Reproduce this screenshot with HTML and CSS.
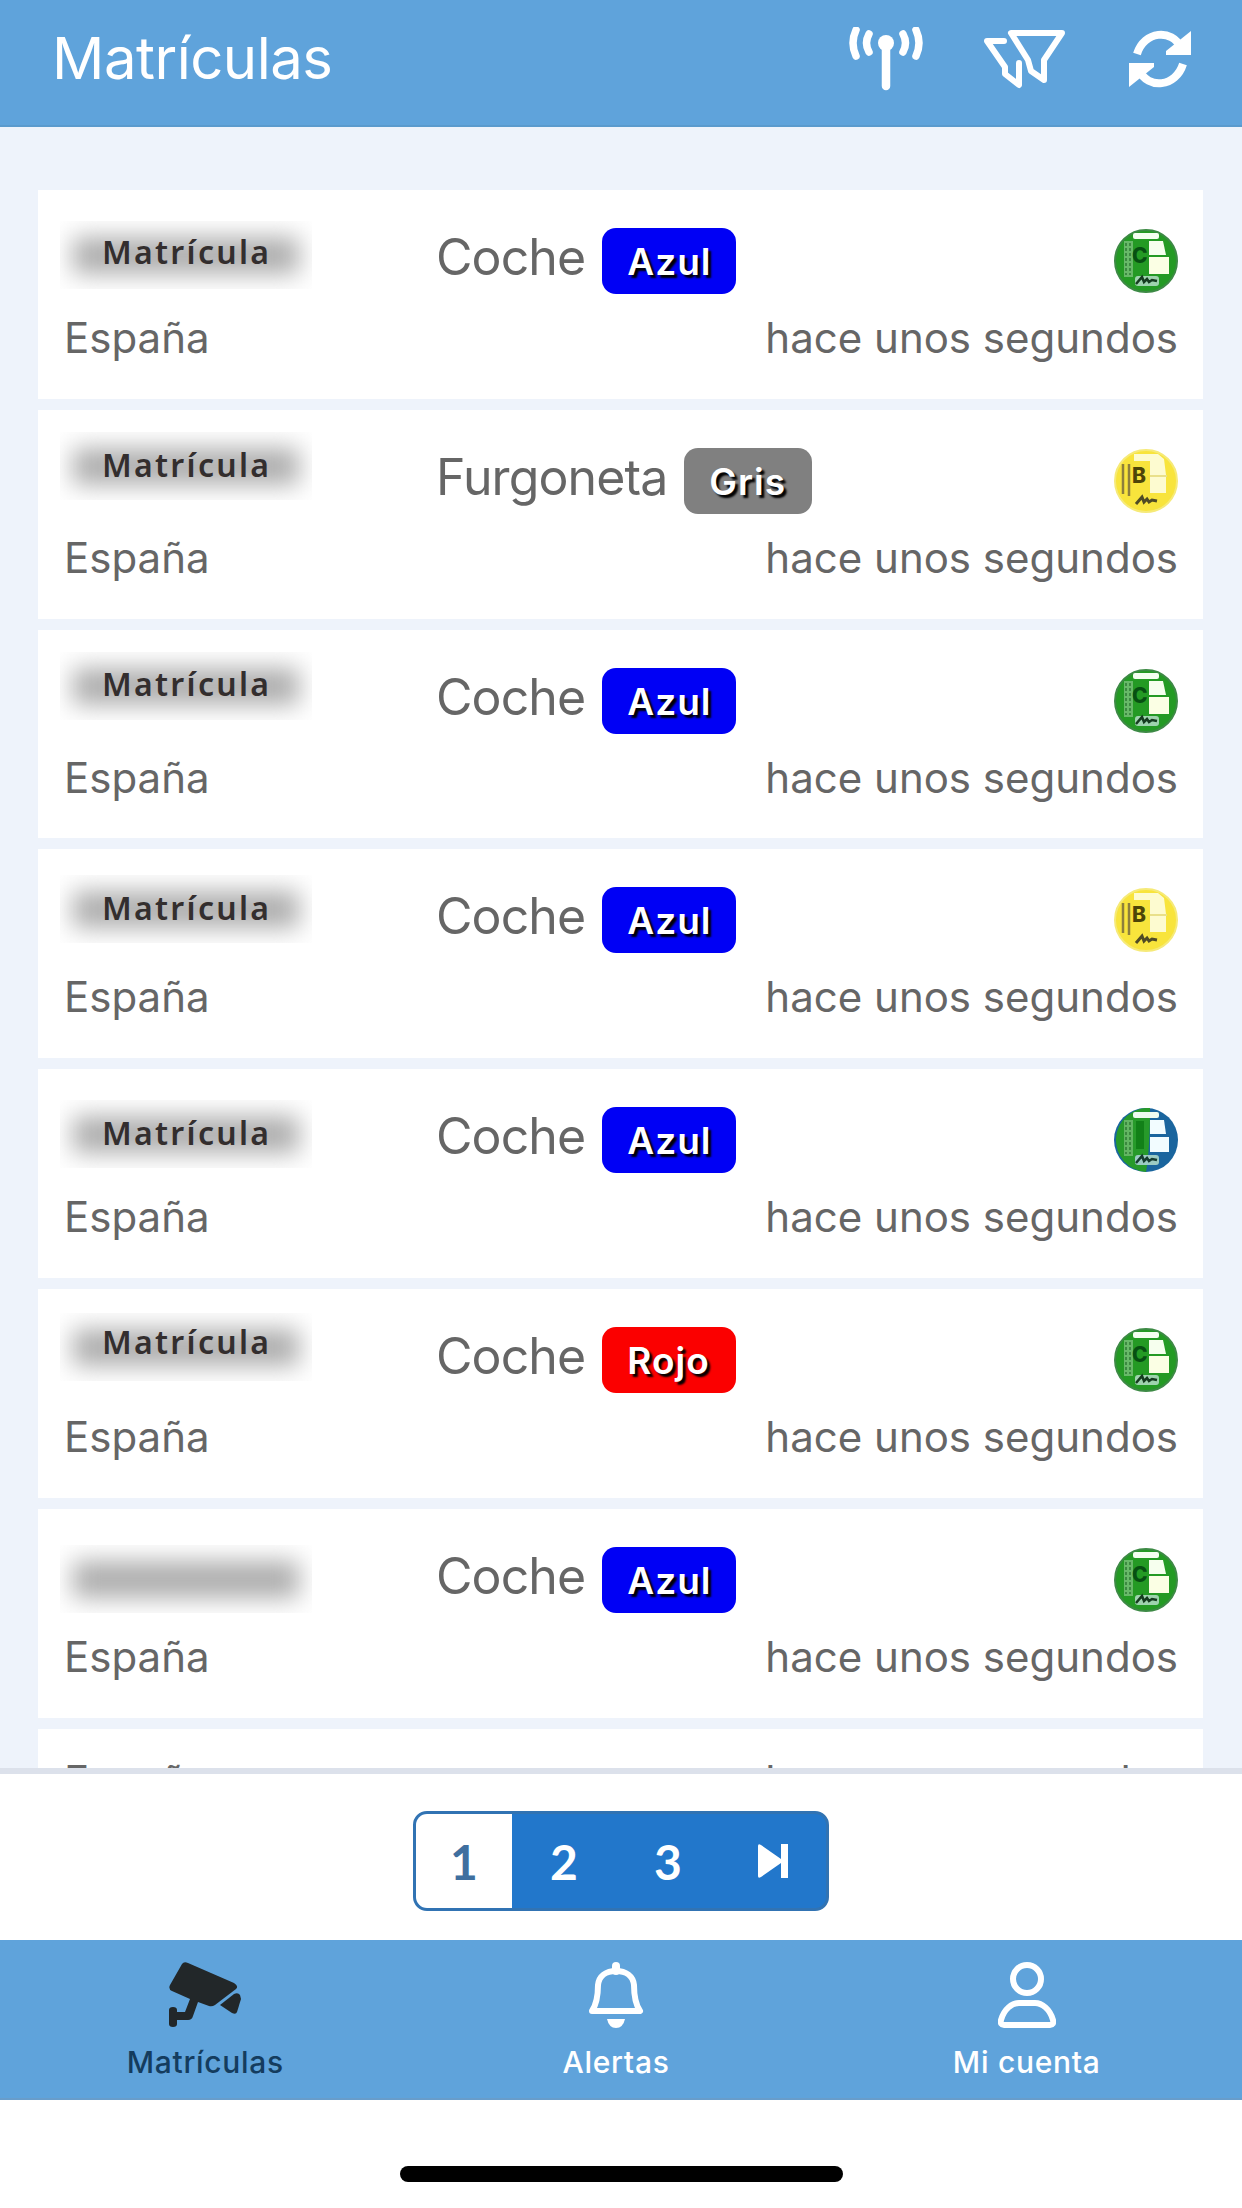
FILE: index.html
```html
<!DOCTYPE html>
<html lang="es">
<head>
  <meta charset="UTF-8" />
  <meta name="viewport" content="width=device-width, initial-scale=1.0"/>
  <title>Matrículas</title>
  <link rel="stylesheet" href="styles.css">
</head>
<body>

<svg class="defs" aria-hidden="true">
  <symbol id="sticker-c" viewBox="0 0 64 64">
    <circle cx="32" cy="32" r="31" fill="#249a24" stroke="#3d8a45" stroke-width="2"/>
    <rect x="10" y="12" width="9" height="36" fill="#68b968"/>
    <path d="M12 14v32M16 14v32" stroke="#2f7a35" stroke-width="1.5" stroke-dasharray="3 2"/>
    <rect x="19" y="4" width="26" height="6" rx="2" fill="#f4fff0"/>
    <path d="M35 12h14l3 14H35z" fill="#f6ffee"/>
    <rect x="35" y="28" width="20" height="17" fill="#fbffe4"/>
    <rect x="21" y="47" width="24" height="10" rx="3" fill="#9fd3ae"/>
    <path d="M22 55l6-7 2 5 3-3 2 3 3-2 5 1" stroke="#163c20" stroke-width="2.5" fill="none"/>
  </symbol>
  <symbol id="sticker-b" viewBox="0 0 64 64">
    <circle cx="32" cy="32" r="31" fill="#f8e43c" stroke="#f6ea78" stroke-width="2"/>
    <path d="M9 15v30M15 15v32" stroke="#8d7f3c" stroke-width="2.5"/>
    <path d="M20 5h24l6 5 2 16v18H36V12H20z" fill="#fdfbd0"/>
    <path d="M36 27h17" stroke="#e9e08a" stroke-width="2"/>
    <path d="M22 55l6-7 2 5 3-3 2 3 3-2 5 1" stroke="#4f4b25" stroke-width="3" fill="none"/>
  </symbol>
  <symbol id="sticker-eco" viewBox="0 0 64 64">
    <circle cx="32" cy="32" r="32" fill="#1a659e"/>
    <path d="M36 0A32 32 0 1 0 32 64Q36 40 36 0z" fill="#279a2a"/>
    <rect x="10" y="12" width="9" height="36" fill="#62b562"/>
    <path d="M12 14v32M16 14v32" stroke="#2f7a35" stroke-width="1.5" stroke-dasharray="3 2"/>
    <rect x="19" y="4" width="26" height="6" rx="2" fill="#eefbf0"/>
    <path d="M22 13h8v28h-8z" fill="#128018"/>
    <path d="M36 12h14l2 14H36z" fill="#f2fcff"/>
    <rect x="36" y="29" width="19" height="15" fill="#f2fcff"/>
    <rect x="21" y="47" width="24" height="10" rx="3" fill="#9ccbc3"/>
    <path d="M22 55l6-7 2 5 3-3 2 3 3-2 5 1" stroke="#163c30" stroke-width="2.5" fill="none"/>
  </symbol>
</svg>

<header>
  <h1>Matrículas</h1>
  <div class="actions">
    <svg class="icon-antenna" viewBox="0 0 74 64" fill="none" stroke="#fff" stroke-linecap="round">
      <circle cx="37" cy="16" r="8" fill="#fff" stroke="none"/>
      <path d="M37 18v41" stroke-width="8.5"/>
      <path d="M20 7q-5 9 0 18M54 7q5 9 0 18" stroke-width="7.5"/>
      <path d="M7 3q-6 13 0 26M67 3q6 13 0 26" stroke-width="7.5"/>
    </svg>
    <svg class="icon-filter" viewBox="0 0 82 60" fill="none" stroke="#fff" stroke-width="6" stroke-linejoin="round" stroke-linecap="round">
      <path d="M28 4h51L61 31v20l-13-9-3-11z"/>
      <path d="M21 12H4L22 38v7l14 11V34"/>
    </svg>
    <svg class="icon-refresh" viewBox="0 0 62 58" fill="none" stroke="#fff" stroke-width="8">
      <path d="M8 24C15 1 43-2 52 18M54 34C47 57 19 60 10 40"/>
      <path d="M62 1v24H37v-4zM0 57V33h25v4z" fill="#fff" stroke="none"/>
    </svg>
  </div>
</header>

<main>
  <article class="card">
    <div class="plate"><span>Matrícula</span></div>
    <div class="vehicle">Coche <b class="badge blue">Azul</b></div>
    <svg class="sticker" viewBox="0 0 64 64"><use href="#sticker-c"/><text x="18" y="34" fill="#075012">C</text></svg>
    <p class="country">España</p>
    <p class="time">hace unos segundos</p>
  </article>
  <article class="card">
    <div class="plate"><span>Matrícula</span></div>
    <div class="vehicle">Furgoneta <b class="badge gray">Gris</b></div>
    <svg class="sticker" viewBox="0 0 64 64"><use href="#sticker-b"/><text x="18" y="34" fill="#4d4508">B</text></svg>
    <p class="country">España</p>
    <p class="time">hace unos segundos</p>
  </article>
  <article class="card">
    <div class="plate"><span>Matrícula</span></div>
    <div class="vehicle">Coche <b class="badge blue">Azul</b></div>
    <svg class="sticker" viewBox="0 0 64 64"><use href="#sticker-c"/><text x="18" y="34" fill="#075012">C</text></svg>
    <p class="country">España</p>
    <p class="time">hace unos segundos</p>
  </article>
  <article class="card">
    <div class="plate"><span>Matrícula</span></div>
    <div class="vehicle">Coche <b class="badge blue">Azul</b></div>
    <svg class="sticker" viewBox="0 0 64 64"><use href="#sticker-b"/><text x="18" y="34" fill="#4d4508">B</text></svg>
    <p class="country">España</p>
    <p class="time">hace unos segundos</p>
  </article>
  <article class="card">
    <div class="plate"><span>Matrícula</span></div>
    <div class="vehicle">Coche <b class="badge blue">Azul</b></div>
    <svg class="sticker" viewBox="0 0 64 64"><use href="#sticker-eco"/></svg>
    <p class="country">España</p>
    <p class="time">hace unos segundos</p>
  </article>
  <article class="card">
    <div class="plate"><span>Matrícula</span></div>
    <div class="vehicle">Coche <b class="badge red">Rojo</b></div>
    <svg class="sticker" viewBox="0 0 64 64"><use href="#sticker-c"/><text x="18" y="34" fill="#075012">C</text></svg>
    <p class="country">España</p>
    <p class="time">hace unos segundos</p>
  </article>
  <article class="card">
    <div class="plate"></div>
    <div class="vehicle">Coche <b class="badge blue">Azul</b></div>
    <svg class="sticker" viewBox="0 0 64 64"><use href="#sticker-c"/><text x="18" y="34" fill="#075012">C</text></svg>
    <p class="country">España</p>
    <p class="time">hace unos segundos</p>
  </article>
  <article class="card partial">
    <p class="country">España</p>
    <p class="time">hace unos segundos</p>
  </article>
</main>

<section class="pagination">
  <div class="pages">
    <a class="current">1</a>
    <a>2</a>
    <a>3</a>
    <a>
      <svg width="30" height="34" viewBox="0 0 30 34" fill="#fff">
        <path d="M0 2q0-3 3-1l20 14V0h7v34h-7V19L3 33q-3 2-3-1z"/>
      </svg>
    </a>
  </div>
</section>

<nav>
  <a class="active">
    <svg width="72" height="66" viewBox="0 0 72 66" fill="#222729">
      <path d="M13 2q2-3 6-1l46 20q5 3 2 6L46 43q-3 2-6 1l-11-4-5 14q-1 4-5 4H8v4q0 3-4 3t-4-3V48q0-3 4-3t4 3v2h8l5-13L3 29q-4-2-2-6z"/>
      <path d="M51 43l14-11q4-2 6 1l1 4-4 13q-1 3-5 1z"/>
    </svg>
    Matrículas
  </a>
  <a>
    <svg width="56" height="66" viewBox="0 0 56 66" fill="none" stroke="#fff">
      <path d="M4 49q6-9 6-26C11 14 18 9 28 9s17 5 18 14q0 17 6 26z" stroke-width="6" stroke-linejoin="round"/>
      <path d="M28 4v5" stroke-width="8" stroke-linecap="round"/>
      <path d="M19 57h18q-2 9-9 9t-9-9z" fill="#fff" stroke="none"/>
    </svg>
    Alertas
  </a>
  <a>
    <svg width="58" height="66" viewBox="0 0 58 66" fill="none" stroke="#fff" stroke-width="6">
      <circle cx="29" cy="17" r="14"/>
      <path d="M6 63q-4 0-3-5c3-11 11-17 18-17h16c7 0 15 6 18 17q1 5-3 5z"/>
    </svg>
    Mi cuenta
  </a>
</nav>

<footer><div class="home-bar"></div></footer>

</body>
</html>
```
FILE: styles.css
```css
* {
  box-sizing: border-box;
}

body {
  margin: 0;
  height: 2208px;
  display: flex;
  flex-direction: column;
  font-family: Inter, "Liberation Sans", sans-serif;
  color: #666;
  background-color: #fff;
  overflow: hidden;
}

.defs {
  position: absolute;
  width: 0;
  height: 0;
}

header {
  height: 127px;
  padding: 0 51px 0 52px;
  display: flex;
  justify-content: space-between;
  background-color: #5fa3db;
  border-bottom: 2px solid #5a9acd;
}

h1 {
  margin: 20px 0 0;
  font-size: 58px;
  font-weight: 400;
  line-height: 76px;
  letter-spacing: -0.5px;
  color: #fff;
}

.actions {
  display: flex;
  padding-top: 27px;
}

.icon-antenna {
  width: 74px;
  height: 64px;
  margin-right: 60px;
}

.icon-filter {
  width: 82px;
  height: 60px;
  margin: 2px 64px 0 0;
}

.icon-refresh {
  width: 62px;
  height: 58px;
  margin-top: 3px;
}

main {
  height: 1641px;
  padding: 63px 39px 0 38px;
  display: flex;
  flex-direction: column;
  gap: 11px;
  overflow: hidden;
  background-color: #eef3fb;
}

.card {
  flex: none;
  height: 208.8px;
  padding: 0 25px 0 22px;
  display: grid;
  grid-template-columns: 376px 1fr auto;
  grid-template-rows: 118px 60px;
  background-color: #fff;
}

.plate {
  position: relative;
  width: 252px;
  height: 68px;
  margin-top: 31px;
  overflow: hidden;
}

.plate::before {
  content: "";
  position: absolute;
  inset: 16px 13px 15px;
  background-color: #adadad;
  filter: blur(12px);
}

.plate span {
  position: relative;
  display: block;
  padding: 13px 0 0 42px;
  font-family: "Noto Sans", sans-serif;
  font-size: 32px;
  font-weight: 600;
  line-height: 36px;
  letter-spacing: 2.3px;
  color: #332e2e;
}

/* the plate labels are not all at the same height */
.card:nth-child(2) .plate,
.card:nth-child(3) .plate {
  margin-top: 22px;
}

.card:nth-child(4) .plate {
  margin-top: 26px;
}

.card:nth-child(6) .plate {
  margin-top: 24px;
}

.card:nth-child(7) .plate {
  margin-top: 36px;
}

.card:nth-child(n+2) .plate span {
  padding-top: 15px;
}

.card:nth-child(3) .plate span {
  padding-top: 14px;
}

.card:nth-child(6) .plate span {
  padding-top: 11px;
}

.vehicle {
  padding-top: 32px;
  display: flex;
  gap: 17px;
  font-size: 50px;
  line-height: 70px;
  letter-spacing: -0.9px;
}

.badge {
  height: 66px;
  margin-top: 6px;
  padding: 0 24px 0 25px;
  border-radius: 14px;
  font-size: 37px;
  font-weight: 600;
  line-height: 67px;
  letter-spacing: 1px;
  color: #fff;
  text-shadow: 3px 3px 2px #000;
}

.blue {
  background-color: #0000f5;
}

.gray {
  padding: 0 26px 0 25px;
  background-color: #808080;
}

.red {
  padding: 0 26px 0 25px;
  background-color: #fb0000;
}

.sticker {
  width: 64px;
  height: 64px;
  margin-top: 39px;
}

.sticker text {
  font-size: 21px;
  font-weight: 800;
}

.country,
.time {
  margin: 0;
  font-size: 42px;
  line-height: 60px;
}

.country {
  padding-left: 4px;
}

.time {
  grid-column: 2 / 4;
  text-align: right;
}

.partial {
  grid-template-rows: 60px;
  padding-top: 22px;
}

.pagination {
  height: 172px;
  padding-top: 37px;
  border-top: 6px solid #dce1eb;
}

.pages {
  width: 416px;
  height: 100px;
  margin-left: 413px;
  display: grid;
  grid-template-columns: 96px 104px 104px 1fr;
  border: 3px solid #3173b3;
  border-radius: 14px;
  background-color: #2277cb;
  overflow: hidden;
}

.pages a {
  display: flex;
  align-items: center;
  justify-content: center;
  font-family: Lato, sans-serif;
  font-size: 48px;
  font-weight: 700;
  color: #fff;
}

.pages .current {
  background-color: #fff;
  color: #3f6f9f;
}

nav {
  height: 160px;
  padding: 22px 10px 0 0;
  display: flex;
  background-color: #5fa3db;
  border-bottom: 2px solid #689dcb;
}

nav a {
  flex: 1;
  display: flex;
  flex-direction: column;
  align-items: center;
  gap: 14px;
  font-size: 30px;
  font-weight: 500;
  line-height: 40px;
  letter-spacing: 0.7px;
  color: #fff;
}

nav .active {
  color: #143c5e;
}

footer {
  flex: 1;
  padding-top: 66px;
}

.home-bar {
  width: 443px;
  height: 16px;
  margin-left: 400px;
  border-radius: 8px;
  background-color: #000;
}
```
